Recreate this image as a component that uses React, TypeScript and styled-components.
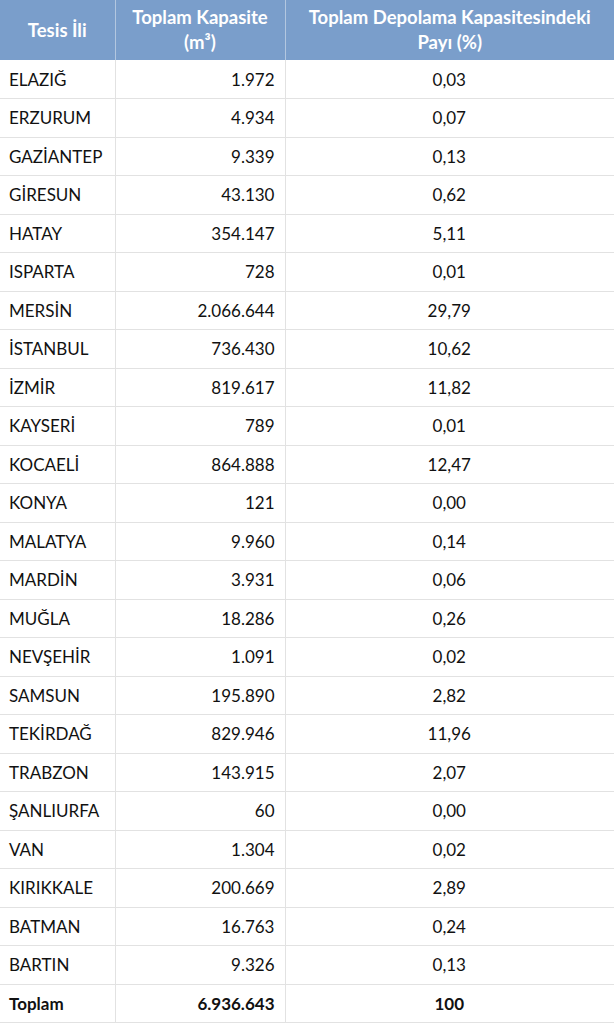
import styled, { createGlobalStyle } from "styled-components";

const GlobalStyle = createGlobalStyle`
  body {
    margin: 0;
    background: #ffffff;
    font-family: "Lato", "Open Sans", sans-serif;
  }
`;

const Table = styled.table`
  width: 614px;
  border-collapse: collapse;
  table-layout: fixed;
  color: #111111;
`;

const HeadCell = styled.th`
  height: 60px;
  padding: 0 4px;
  background: #7a9ecb;
  color: #ffffff;
  font-size: 18.5px;
  font-weight: 700;
  line-height: 25px;
  text-align: center;
  vertical-align: middle;
  border-left: 1px solid #b3c7e0;
  &:first-child {
    border-left: none;
  }
`;

const Row = styled.tr`
  height: 38.5px;
  border-bottom: 1px solid #e2e2e2;
`;

const Cell = styled.td<{ $align: "left" | "right" | "center"; $bold?: boolean }>`
  padding: 0 10px 0 9px;
  font-size: 17px;
  font-weight: ${(p) => (p.$bold ? 700 : 400)};
  text-align: ${(p) => p.$align};
  vertical-align: middle;
  border-left: 1px solid #e2e2e2;
  &:first-child {
    border-left: none;
  }
`;

const rows: [string, string, string][] = [
  ["ELAZIĞ", "1.972", "0,03"],
  ["ERZURUM", "4.934", "0,07"],
  ["GAZİANTEP", "9.339", "0,13"],
  ["GİRESUN", "43.130", "0,62"],
  ["HATAY", "354.147", "5,11"],
  ["ISPARTA", "728", "0,01"],
  ["MERSİN", "2.066.644", "29,79"],
  ["İSTANBUL", "736.430", "10,62"],
  ["İZMİR", "819.617", "11,82"],
  ["KAYSERİ", "789", "0,01"],
  ["KOCAELİ", "864.888", "12,47"],
  ["KONYA", "121", "0,00"],
  ["MALATYA", "9.960", "0,14"],
  ["MARDİN", "3.931", "0,06"],
  ["MUĞLA", "18.286", "0,26"],
  ["NEVŞEHİR", "1.091", "0,02"],
  ["SAMSUN", "195.890", "2,82"],
  ["TEKİRDAĞ", "829.946", "11,96"],
  ["TRABZON", "143.915", "2,07"],
  ["ŞANLIURFA", "60", "0,00"],
  ["VAN", "1.304", "0,02"],
  ["KIRIKKALE", "200.669", "2,89"],
  ["BATMAN", "16.763", "0,24"],
  ["BARTIN", "9.326", "0,13"],
];

function App() {
  return (
    <>
      <GlobalStyle />
      <Table>
        <colgroup>
          <col style={{ width: 115 }} />
          <col style={{ width: 170 }} />
          <col style={{ width: 329 }} />
        </colgroup>
        <thead>
          <tr>
            <HeadCell>Tesis İli</HeadCell>
            <HeadCell>
              Toplam Kapasite
              <br />
              (m³)
            </HeadCell>
            <HeadCell>
              Toplam Depolama Kapasitesindeki
              <br />
              Payı (%)
            </HeadCell>
          </tr>
        </thead>
        <tbody>
          {rows.map(([city, cap, share]) => (
            <Row key={city}>
              <Cell $align="left">{city}</Cell>
              <Cell $align="right">{cap}</Cell>
              <Cell $align="center">{share}</Cell>
            </Row>
          ))}
          <Row>
            <Cell $align="left" $bold>
              Toplam
            </Cell>
            <Cell $align="right" $bold>
              6.936.643
            </Cell>
            <Cell $align="center" $bold>
              100
            </Cell>
          </Row>
        </tbody>
      </Table>
    </>
  );
}

export default App;
